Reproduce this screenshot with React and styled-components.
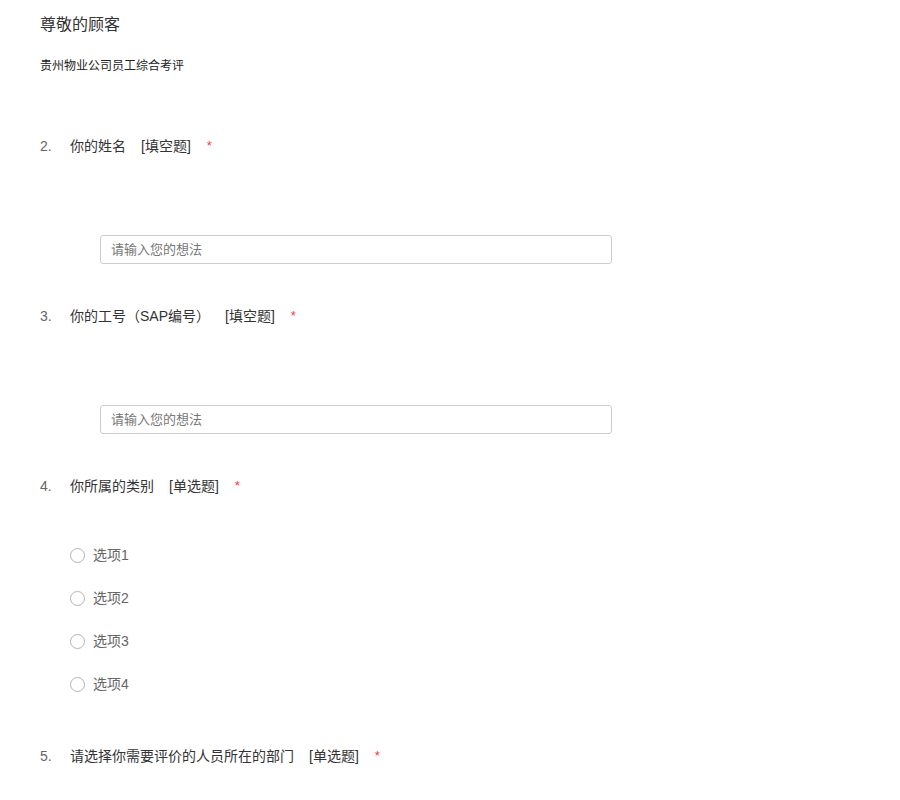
import React from 'react';
import styled, { createGlobalStyle } from 'styled-components';

const GlobalStyle = createGlobalStyle`
  html, body {
    margin: 0;
    padding: 0;
    background: #fff;
  }
  body {
    font-family: "Liberation Sans", "Noto Sans CJK SC", sans-serif;
    color: #333;
  }
`;

const Page = styled.div`
  padding: 15px 0 10px 40px;
  display: flex;
  flex-direction: column;
`;

const Title = styled.div`
  font-size: 16px;
  line-height: 20px;
  color: #333;
`;

const SubTitle = styled.div`
  font-size: 12px;
  line-height: 20px;
  color: #222;
  margin-top: 21px;
`;

const Questions = styled.div`
  display: flex;
  flex-direction: column;
  margin-top: 60px;
`;

const Question = styled.div`
  display: flex;
  flex-direction: column;
  margin-bottom: ${({ spacing }) => spacing}px;
`;

const QuestionHead = styled.div`
  display: flex;
  align-items: center;
  font-size: 14px;
  line-height: 20px;
  color: #333;
`;

const Num = styled.span`
  width: 30px;
  color: #666;
`;

const Tag = styled.span`
  margin-left: 15px;
`;

const Required = styled.span`
  margin-left: 16px;
  color: #f33;
  font-size: 13px;
`;

const TextInput = styled.input`
  box-sizing: border-box;
  margin: 79px 0 0 60px;
  width: 512px;
  height: 29px;
  padding: 0 10px;
  border: 1px solid #ccc;
  border-radius: 3px;
  font-family: inherit;
  font-size: 13px;
  color: #333;
  outline: none;
  &::placeholder {
    color: #777;
  }
`;

const Options = styled.div`
  display: flex;
  flex-direction: column;
  gap: 23px;
  margin: 49px 0 0 30px;
`;

const Option = styled.label`
  display: flex;
  align-items: center;
  gap: 8px;
  font-size: 14px;
  line-height: 20px;
  color: #666;
`;

const Circle = styled.span`
  box-sizing: border-box;
  width: 15px;
  height: 15px;
  border: 1px solid #b3b3b3;
  border-radius: 50%;
  background: #fff;
`;

const questions = [
  { no: 2, title: '你的姓名', type: '填空题' },
  { no: 3, title: '你的工号（SAP编号）', type: '填空题' },
  { no: 4, title: '你所属的类别', type: '单选题', options: ['选项1', '选项2', '选项3', '选项4'] },
  { no: 5, title: '请选择你需要评价的人员所在的部门', type: '单选题', options: [] },
];

const spacingFor = (q) => {
  if (!q.options) return 42;
  return q.options.length ? 52 : 0;
};

export default function App() {
  return (
    <>
      <GlobalStyle />
      <Page>
        <Title>尊敬的顾客</Title>
        <SubTitle>贵州物业公司员工综合考评</SubTitle>
        <Questions>
          {questions.map((q) => (
            <Question key={q.no} spacing={spacingFor(q)}>
              <QuestionHead>
                <Num>{q.no}.</Num>
                <span>{q.title}</span>
                <Tag>[{q.type}]</Tag>
                <Required>*</Required>
              </QuestionHead>
              {!q.options && <TextInput placeholder="请输入您的想法" />}
              {q.options && q.options.length > 0 && (
                <Options>
                  {q.options.map((o) => (
                    <Option key={o}>
                      <Circle />
                      {o}
                    </Option>
                  ))}
                </Options>
              )}
            </Question>
          ))}
        </Questions>
      </Page>
    </>
  );
}
